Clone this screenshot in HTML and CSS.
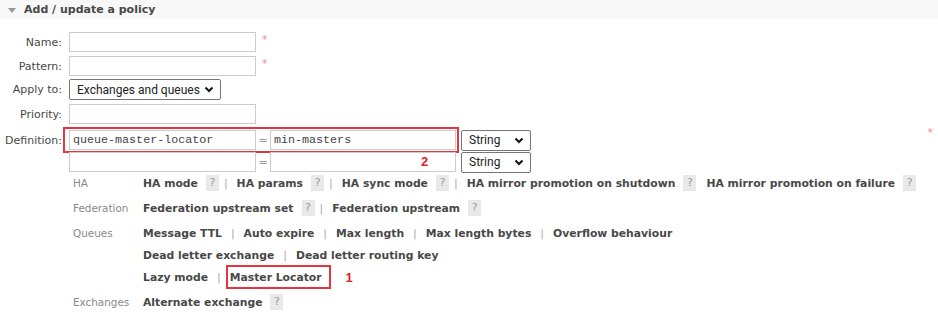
FILE: index.html
```html
<!DOCTYPE html>
<html lang="en">
<head>
  <meta charset="UTF-8">
  <title>Add / update a policy</title>
  <link rel="stylesheet" href="styles.css">
</head>
<body>
  <div class="section-head"><span class="tri"></span>Add / update a policy</div>
  <form class="policy-form" onsubmit="return false;">
    <div class="row r-name">
      <label class="lbl">Name:</label>
      <input class="txt" type="text">
      <span class="req">*</span>
    </div>
    <div class="row r-pattern">
      <label class="lbl">Pattern:</label>
      <input class="txt" type="text">
      <span class="req">*</span>
    </div>
    <div class="row r-apply">
      <label class="lbl">Apply to:</label>
      <select class="sel sel-apply">
        <option>Exchanges and queues</option>
      </select>
    </div>
    <div class="row r-priority">
      <label class="lbl">Priority:</label>
      <input class="txt" type="text">
    </div>
    <div class="row r-def">
      <label class="lbl">Definition:</label>
      <div class="def-pair mark-box">
        <input class="txt mono" type="text" value="queue-master-locator">
        <span class="eq">=</span>
        <input class="txt mono val" type="text" value="min-masters">
      </div>
      <select class="sel sel-type"><option>String</option></select>
      <span class="req req-far">*</span>
    </div>
    <div class="row r-def2">
      <span class="lbl"></span>
      <div class="def-pair">
        <input class="txt mono" type="text">
        <span class="eq">=</span>
        <input class="txt mono val" type="text">
        <span class="note note-2">2</span>
      </div>
      <select class="sel sel-type"><option>String</option></select>
    </div>

    <div class="help">
      <div class="help-group">
        <div class="help-lbl">HA</div>
        <div class="help-links">
          <div class="line">
            <a>HA mode</a><span class="q">?</span><span class="sep">|</span>
            <a>HA params</a><span class="q">?</span><span class="sep">|</span>
            <a>HA sync mode</a><span class="q">?</span><span class="sep">|</span>
            <a>HA mirror promotion on shutdown</a><span class="q">?</span>
            <a>HA mirror promotion on failure</a><span class="q">?</span>
          </div>
        </div>
      </div>
      <div class="help-group">
        <div class="help-lbl">Federation</div>
        <div class="help-links">
          <div class="line">
            <a>Federation upstream set</a><span class="q">?</span><span class="sep">|</span>
            <a>Federation upstream</a><span class="q">?</span>
          </div>
        </div>
      </div>
      <div class="help-group">
        <div class="help-lbl">Queues</div>
        <div class="help-links">
          <div class="line">
            <a>Message TTL</a><span class="sep">|</span>
            <a>Auto expire</a><span class="sep">|</span>
            <a>Max length</a><span class="sep">|</span>
            <a>Max length bytes</a><span class="sep">|</span>
            <a>Overflow behaviour</a>
          </div>
          <div class="line">
            <a>Dead letter exchange</a><span class="sep">|</span>
            <a>Dead letter routing key</a>
          </div>
          <div class="line">
            <a>Lazy mode</a><span class="sep">|</span>
            <a class="mark-link">Master Locator</a>
            <span class="note note-1">1</span>
          </div>
        </div>
      </div>
      <div class="help-group">
        <div class="help-lbl">Exchanges</div>
        <div class="help-links">
          <div class="line">
            <a>Alternate exchange</a><span class="q">?</span>
          </div>
        </div>
      </div>
    </div>
  </form>
</body>
</html>
```

FILE: styles.css
```css
html, body {
  margin: 0; padding: 0;
  background: #fff;
  font-family: "DejaVu Sans", Verdana, sans-serif;
  font-size: 11px;
  color: #484848;
}
.section-head {
  height: 19px;
  background: #f8f8f8;
  font-weight: bold;
  font-size: 11px;
  color: #484848;
  padding-left: 8px;
  display: flex;
  align-items: center;
}
.tri {
  width: 0; height: 0;
  border-left: 4px solid transparent;
  border-right: 4px solid transparent;
  border-top: 5px solid #999;
  margin-right: 8px;
  margin-top: 1px;
}
.policy-form {
  padding-top: 13px;
}
.row {
  display: flex;
  align-items: center;
  position: relative;
}
.r-name { height: 20px; margin-bottom: 4px; }
.r-pattern { height: 20px; margin-bottom: 3px; }
.r-apply { height: 21px; margin-bottom: 4px; }
.r-priority { height: 20px; margin-bottom: 6px; }
.r-def { height: 20px; margin-bottom: 2px; }
.r-def2 { height: 20px; }
.lbl {
  width: 62px;
  text-align: right;
  flex: none;
  margin-right: 7px;
}
.txt {
  box-sizing: border-box;
  width: 187px;
  height: 20px;
  border: 1px solid #ccc;
  padding: 0 3px;
  margin: 0;
  font-family: "DejaVu Sans", sans-serif;
  font-size: 11px;
  color: #484848;
  outline: none;
}
.mono {
  font-family: "Liberation Mono", "Courier New", monospace;
  font-size: 11.7px;
  color: #444;
}
.val { width: 186px; }
.req {
  color: #f88;
  font-size: 11px;
  margin-left: 6px;
  align-self: flex-start;
  margin-top: 1px;
}
.req-far {
  margin-left: auto;
  margin-right: 5px;
  margin-top: -4px;
}
.sel {
  box-sizing: border-box;
  height: 21px;
  border: 1px solid #767676;
  border-radius: 2px;
  background: #fff url("data:image/svg+xml;utf8,<svg xmlns='http://www.w3.org/2000/svg' width='10' height='7' viewBox='0 0 10 7'><polyline points='1.5,1.5 5,5 8.5,1.5' fill='none' stroke='%23111' stroke-width='2'/></svg>") no-repeat right 6px center;
  -webkit-appearance: none;
  appearance: none;
  font-family: Roboto, "Liberation Sans", Arial, sans-serif;
  font-size: 12px;
  color: #222;
  padding: 0 0 0 7px;
  margin: 0;
}
.sel-apply { width: 152px; }
.sel-type { width: 70px; margin-left: 5px; }
.def-pair {
  display: flex;
  align-items: center;
  position: relative;
}
.eq {
  width: 14px;
  text-align: center;
  color: #999;
}
.mark-box::after {
  content: "";
  position: absolute;
  left: -6px; right: -3px;
  top: -3px; bottom: -3px;
  border: 2px solid #e5363f;
  pointer-events: none;
}
.note {
  position: absolute;
  color: #e01f26;
  font-weight: bold;
  font-size: 13px;
  font-family: "Liberation Sans", Arial, sans-serif;
}
.note-2 { left: 352px; top: 2px; }
.help {
  margin-top: 1px;
}
.help-group {
  display: flex;
  padding-left: 73px;
  margin-bottom: 3px;
}
.help-lbl {
  width: 70px;
  color: #888;
  font-size: 10.4px;
  flex: none;
  line-height: 20px;
}
.help-links { flex: 1; }
.line {
  display: flex;
  align-items: center;
  height: 20px;
  margin-bottom: 2px;
  position: relative;
  white-space: nowrap;
}
.line a {
  font-weight: bold;
  font-size: 10.8px;
  color: #484848;
}
.q {
  display: inline-block;
  background: #e9e9e9;
  color: #999;
  width: 13px;
  height: 16px;
  line-height: 16px;
  text-align: center;
  margin-left: 8px;
}
.q + a { margin-left: 10px; }
.sep {
  color: #aaa;
  margin: 0 9px;
}
.q + .sep { margin-left: 5px; }
.mark-link {
  position: relative;
}
.mark-link::after {
  content: "";
  position: absolute;
  left: -4px; right: -9px;
  top: -6px; bottom: -5px;
  border: 2px solid #e5363f;
}
.note-1 { position: static; margin-left: 24px; }
```
